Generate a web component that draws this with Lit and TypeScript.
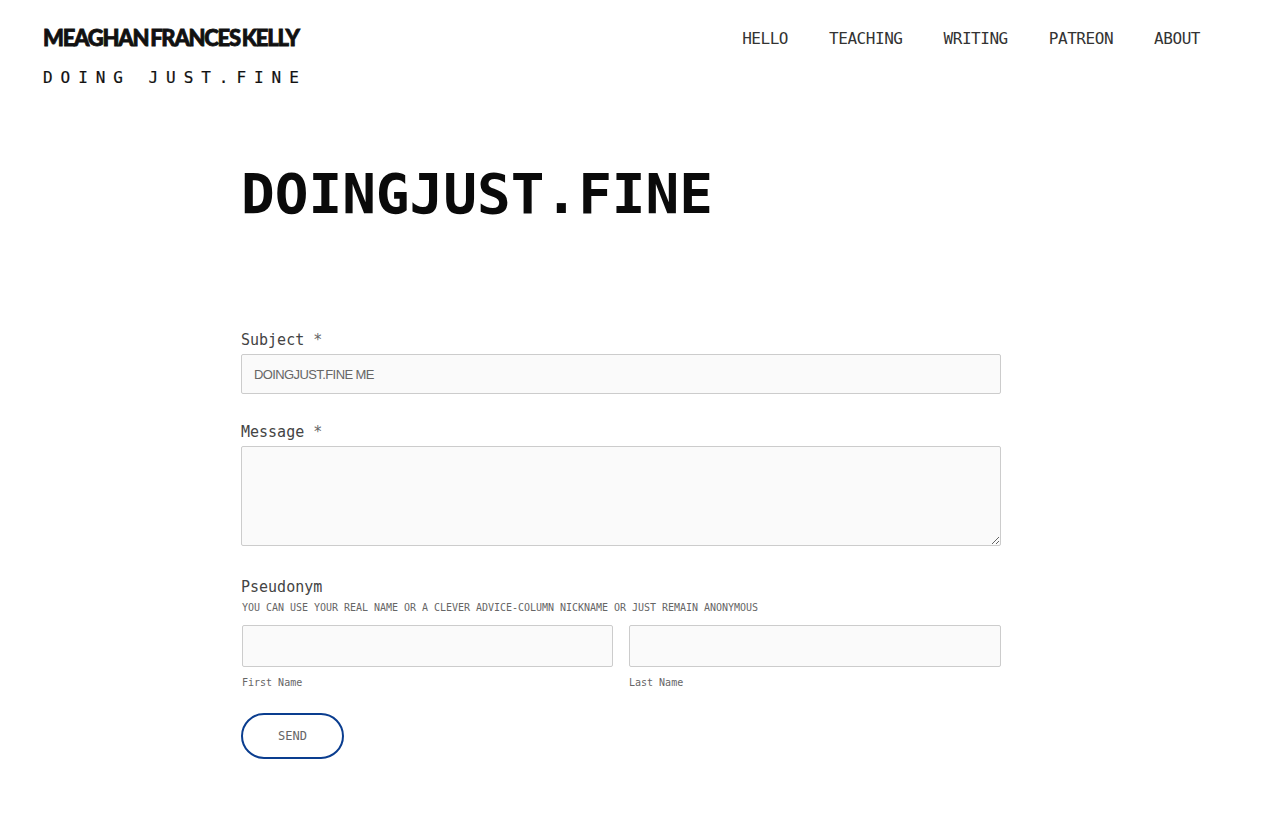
import { LitElement, html, css } from "lit";
import { customElement } from "lit/decorators.js";

@customElement("app-root")
export class AppRoot extends LitElement {
  static styles = css`
    :host { display: block; background: #fff; height: 837px; overflow: hidden; font-family: "DejaVu Sans Mono", "Liberation Mono", monospace; color: #222; }
    header { display: flex; justify-content: space-between; align-items: flex-start; padding: 26px 86px 0 43px; height: 100px; box-sizing: border-box; }
    .brand { display: flex; flex-direction: column; }
    .logo { font-family: Lato, "Liberation Sans", sans-serif; font-weight: 900; font-size: 22px; line-height: 24px; letter-spacing: -1.25px; color: #111; white-space: nowrap; word-spacing: -2px; -webkit-text-stroke: 0.8px #111; }
    .tag { margin-top: 18px; font-size: 16px; line-height: 20px; font-weight: 400; letter-spacing: 7.95px; color: #111; white-space: pre; -webkit-text-stroke: 0.2px #111; }
    nav { display: flex; gap: 41px; padding-top: 3px; }
    nav a { font-size: 16px; line-height: 20px; letter-spacing: -0.45px; color: #333; }
    main { margin-left: 241px; width: 760px; }
    h1 { margin: 58px 0 0; font-size: 56px; line-height: 72px; font-weight: 700; color: #0a0a0a; letter-spacing: 0; }
    form { margin-top: 100px; display: flex; flex-direction: column; }
    label { display: block; font-size: 15px; line-height: 20px; color: #444; }
    .req { color: #666; }
    .field { display: flex; flex-direction: column; gap: 4px; margin-bottom: 28px; }
    .field.last { margin-bottom: 31px; }
    input, textarea { display: block; box-sizing: border-box; width: 100%; margin: 0; border: 1px solid #ccc; border-radius: 2px; background: #fafafa; padding: 0 12px; font-family: "Liberation Sans", sans-serif; font-size: 13px; letter-spacing: -0.6px; color: #666; outline: none; }
    input { height: 40px; }
    textarea { height: 100px; padding: 12px; resize: vertical; }
    .desc { font-size: 10px; line-height: 14px; letter-spacing: -0.02px; color: #666; margin: 4px 0 10px 1px; }
    .names { display: grid; grid-template-columns: 371px 372px; gap: 16px; margin-left: 1px; }
    .names input { height: 42px; }
    .names span { display: block; font-size: 10px; line-height: 14px; color: #666; margin-top: 9px; }
    button { margin-top: 23px; width: 103px; height: 46px; box-sizing: border-box; border: 2px solid #0a3d8f; border-radius: 23px; background: #fff; font-family: "DejaVu Sans Mono", monospace; font-size: 12px; color: #666; padding: 0; }
  `;

  render() {
    return html`
      <header>
        <div class="brand">
          <div class="logo">MEAGHAN FRANCES KELLY</div>
          <div class="tag">DOING JUST.FINE</div>
        </div>
        <nav><a>HELLO</a><a>TEACHING</a><a>WRITING</a><a>PATREON</a><a>ABOUT</a></nav>
      </header>
      <main>
        <h1>DOINGJUST.FINE</h1>
        <form>
          <div class="field">
            <label>Subject <span class="req">*</span></label>
            <input value="DOINGJUST.FINE ME" />
          </div>
          <div class="field last">
            <label>Message <span class="req">*</span></label>
            <textarea></textarea>
          </div>
          <div>
            <label>Pseudonym</label>
            <div class="desc">YOU CAN USE YOUR REAL NAME OR A CLEVER ADVICE-COLUMN NICKNAME OR JUST REMAIN ANONYMOUS</div>
            <div class="names">
              <div><input /><span>First Name</span></div>
              <div><input /><span>Last Name</span></div>
            </div>
          </div>
          <div><button type="button">SEND</button></div>
        </form>
      </main>
    `;
  }
}
